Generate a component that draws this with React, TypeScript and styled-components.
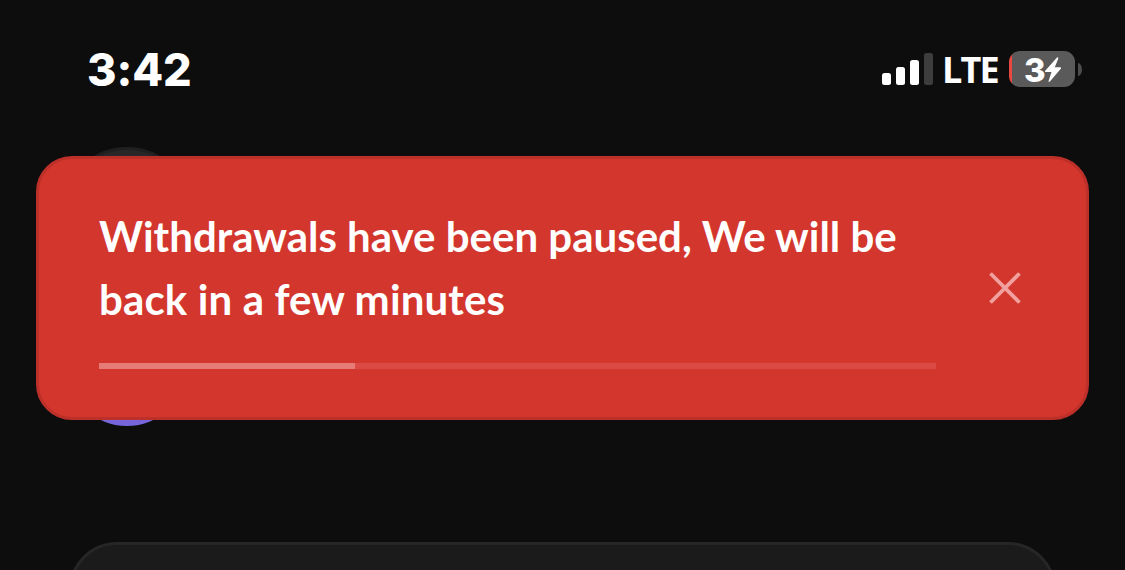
import styled, { createGlobalStyle } from 'styled-components';

const GlobalStyle = createGlobalStyle`
    * {
        box-sizing: border-box;
    }

    body {
        margin: 0;
        background: #0d0d0d;
    }
`;

const Screen = styled.div`
    position: relative;
    display: flex;
    flex-direction: column;
    width: 1125px;
    height: 570px;
    overflow: hidden;
    background: #0d0d0d;
    color: #fff;
    font-family: Inter, 'Liberation Sans', sans-serif;
`;

const StatusBar = styled.header`
    display: flex;
    flex: none;
    align-items: center;
    justify-content: space-between;
    height: 156px;
    padding: 0 43px 18px 87px;
`;

const Time = styled.time`
    padding-top: 1px;
    font-size: 45px;
    font-weight: 800;
    line-height: 54px;
    letter-spacing: -0.1px;
`;

const StatusIcons = styled.div`
    display: flex;
    align-items: center;
`;

const Signal = styled.div`
    display: flex;
    align-items: flex-end;
    gap: 5px;
    height: 32px;
`;

const SignalBar = styled.span<{ $height: number; $off?: boolean }>`
    width: 9px;
    height: ${({ $height }) => $height}px;
    border-radius: 2.5px;
    background: ${({ $off }) => ($off ? '#3d3d3d' : '#fff')};
`;

const Network = styled.span`
    width: 76px;
    padding: 2px 0 0 9px;
    font-family: 'Open Sans', sans-serif;
    font-size: 36px;
    font-weight: 700;
    line-height: 36px;
    letter-spacing: -1.8px;
`;

const Battery = styled.div`
    display: flex;
    align-items: center;
    justify-content: center;
    width: 66px;
    height: 36px;
    padding: 1px 0 0 2px;
    border-radius: 11px;
    background: linear-gradient(to right, #e8483f 3px, #5a5a5a 3px);
    font-size: 33px;
    font-weight: 800;
    line-height: 36px;
    letter-spacing: -1.5px;
`;

const BatteryTip = styled.span`
    width: 4px;
    height: 13px;
    margin-left: 3px;
    border-radius: 0 4px 4px 0 / 0 6.5px 6.5px 0;
    background: #4d4d4d;
`;

const Circle = styled.div<{ $top: number; $size: number }>`
    position: absolute;
    top: ${({ $top }) => $top}px;
    left: ${({ $size }) => 127 - $size / 2}px;
    width: ${({ $size }) => $size}px;
    height: ${({ $size }) => $size}px;
    border-radius: 50%;
`;

const Avatar = styled(Circle)`
    border: 3px solid #202020;
    background: #282828;
`;

const Badge = styled(Circle)`
    background: #7566dc;
`;

const Toast = styled.section`
    position: relative;
    display: flex;
    align-items: center;
    justify-content: space-between;
    flex: none;
    height: 264px;
    margin: 0 36px;
    padding: 0 65px 0 60px;
    border: 3px solid #bd3029;
    border-radius: 36px;
    background: #d3362d;
`;

const ToastBody = styled.div`
    width: 837px;
    padding-bottom: 2px;
`;

const Message = styled.p`
    margin: 0 0 32px;
    font-family: Lato, sans-serif;
    font-size: 42px;
    font-weight: 700;
    line-height: 63px;
    white-space: nowrap;
`;

const MessageLine = styled.span<{ $spacing: number }>`
    display: block;
    letter-spacing: ${({ $spacing }) => $spacing}px;
`;

const Track = styled.div`
    height: 6px;
    background: #dc4a45;
`;

const Progress = styled.div`
    height: 100%;
    background: #e67c77;
`;

const CloseButton = styled.button`
    display: flex;
    padding: 0;
    border: 0;
    background: none;
    color: #f0a19f;
`;

const Panel = styled.main`
    flex: none;
    height: 200px;
    margin: 122px 69px 0;
    border: 3px solid #262626;
    border-radius: 48px;
    background: #1b1b1b;
`;

function App() {
    const progress = 256 / 837;

    return (
        <>
            <GlobalStyle />
            <Screen>
                <StatusBar>
                    <Time>3:42</Time>
                    <StatusIcons>
                        <Signal>
                            <SignalBar $height={12} />
                            <SignalBar $height={18} />
                            <SignalBar $height={25} />
                            <SignalBar $height={32} $off />
                        </Signal>
                        <Network>LTE</Network>
                        <Battery>
                            3
                            <svg width='18' height='26' viewBox='0 0 17 26'>
                                <path
                                    d='M12.5 0.5 L0.5 14 Q0 15 1.2 15 H7 L4 24.2 Q4.2 25.6 5.4 24.6 L16.5 11.6 Q17 10.4 15.8 10.3 H10.3 L13.8 1.4 Q13.8 0 12.5 0.5Z'
                                    fill='#fff'
                                />
                            </svg>
                        </Battery>
                        <BatteryTip />
                    </StatusIcons>
                </StatusBar>

                <Avatar $top={147} $size={130} />
                <Badge $top={306} $size={120} />

                <Toast>
                    <ToastBody>
                        <Message>
                            <MessageLine $spacing={0}>
                                Withdrawals have been paused, We will be
                            </MessageLine>
                            <MessageLine $spacing={0.13}>
                                back in a few minutes
                            </MessageLine>
                        </Message>
                        <Track>
                            <Progress style={{ width: `${progress * 100}%` }} />
                        </Track>
                    </ToastBody>
                    <CloseButton aria-label='Close'>
                        <svg width='32' height='32' viewBox='0 0 32 32'>
                            <path
                                d='M1.5 1.5 L30.5 30.5 M30.5 1.5 L1.5 30.5'
                                stroke='currentColor'
                                strokeWidth='3.8'
                            />
                        </svg>
                    </CloseButton>
                </Toast>

                <Panel />
            </Screen>
        </>
    );
}

export default App;
